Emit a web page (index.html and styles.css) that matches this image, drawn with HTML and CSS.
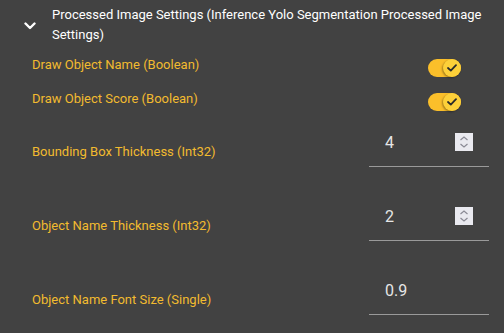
FILE: index.html
```html
<!DOCTYPE html>
<html lang="en">

<head>
  <meta charset="UTF-8" />
  <title>Processed Image Settings</title>
  <link rel="stylesheet" href="styles.css">
</head>

<body>
  <div class="settings">
    <!-- Section header -->
    <div class="section-header">
      <svg class="chevron" width="12" height="8" viewBox="0 0 12 8">
        <polyline points="1.5,1.5 6,6 10.5,1.5" fill="none" stroke="#fff" stroke-width="2.4" stroke-linecap="round" stroke-linejoin="round" />
      </svg>
      <div class="section-title">Processed Image Settings (Inference Yolo Segmentation Processed Image Settings)</div>
    </div>

    <div class="section-body">
      <!-- Boolean settings -->
      <div class="row toggle-row">
        <label class="label">Draw Object Name (Boolean)</label>
        <span class="toggle">
          <span class="thumb">
            <svg width="10" height="8" viewBox="0 0 10 8">
              <polyline points="1,4 3.8,6.6 9,1.2" fill="none" stroke="#2b2b2b" stroke-width="1.8" stroke-linecap="round" stroke-linejoin="round" />
            </svg>
          </span>
        </span>
      </div>
      <div class="row toggle-row">
        <label class="label">Draw Object Score (Boolean)</label>
        <span class="toggle">
          <span class="thumb">
            <svg width="10" height="8" viewBox="0 0 10 8">
              <polyline points="1,4 3.8,6.6 9,1.2" fill="none" stroke="#2b2b2b" stroke-width="1.8" stroke-linecap="round" stroke-linejoin="round" />
            </svg>
          </span>
        </span>
      </div>

      <!-- Numeric settings -->
      <div class="row field-row first">
        <label class="label">Bounding Box Thickness (Int32)</label>
        <div class="number-field">
          <span class="value">4</span>
          <span class="spinner">
            <svg width="18" height="18" viewBox="0 0 18 18">
              <polyline points="5.5,7 9,4 12.5,7" fill="none" stroke="#8a8a94" stroke-width="1.2" />
              <polyline points="5.5,11 9,14 12.5,11" fill="none" stroke="#8a8a94" stroke-width="1.2" />
            </svg>
          </span>
        </div>
      </div>
      <div class="row field-row">
        <label class="label">Object Name Thickness (Int32)</label>
        <div class="number-field">
          <span class="value">2</span>
          <span class="spinner">
            <svg width="18" height="18" viewBox="0 0 18 18">
              <polyline points="5.5,7 9,4 12.5,7" fill="none" stroke="#8a8a94" stroke-width="1.2" />
              <polyline points="5.5,11 9,14 12.5,11" fill="none" stroke="#8a8a94" stroke-width="1.2" />
            </svg>
          </span>
        </div>
      </div>
      <div class="row field-row">
        <label class="label">Object Name Font Size (Single)</label>
        <div class="number-field">
          <span class="value">0.9</span>
        </div>
      </div>
    </div>
  </div>
</body>

</html>
```

FILE: styles.css
```css
/* Reset */
* {
  margin: 0;
  padding: 0;
  box-sizing: border-box;
}

body {
  background: #424242;
  font-family: Roboto, "Noto Sans", sans-serif;
  color: #fff;
}

.settings {
  width: 504px;
  height: 333px;
  overflow: hidden;
}

/* Header */
.section-header {
  display: flex;
  align-items: center;
  padding: 5px 20px 5px 24px;
}

.chevron {
  flex: none;
  margin-right: 16px;
  margin-top: 2px;
}

.section-title {
  font-size: 13px;
  line-height: 20px;
  color: #fff;
}

/* Rows */
.section-body {
  padding: 0 15px 0 32px;
}

.row {
  display: flex;
  justify-content: space-between;
}

.label {
  font-size: 13px;
  line-height: 16px;
  color: #f2bb2f;
}

.toggle-row {
  height: 34px;
  align-items: center;
}

.toggle-row .label {
  margin-bottom: 4px;
}

/* Toggle switch */
.toggle {
  position: relative;
  width: 33px;
  height: 18px;
  margin-right: 28px;
  margin-top: 2px;
  border-radius: 9px;
  background: #fbbf2a;
}

.toggle .thumb {
  position: absolute;
  right: 0;
  top: 0;
  width: 18px;
  height: 18px;
  border-radius: 50%;
  background: #fdd039;
  box-shadow: -1px 1px 2px rgba(0, 0, 0, 0.35);
  display: flex;
  align-items: center;
  justify-content: center;
}

/* Number fields */
.field-row {
  align-items: flex-end;
  margin-top: 25px;
}

.field-row.first {
  margin-top: 0;
}

.field-row .label {
  margin-bottom: 7px;
}

.number-field {
  width: 120px;
  height: 49px;
  display: flex;
  align-items: center;
  justify-content: space-between;
  padding: 0 16px;
  border-bottom: 1px solid #9a9a9a;
}

.value {
  font-size: 16px;
  color: #e6e6e6;
}

.spinner {
  width: 18px;
  height: 18px;
  background: #e9e9ef;
  display: flex;
}
```
